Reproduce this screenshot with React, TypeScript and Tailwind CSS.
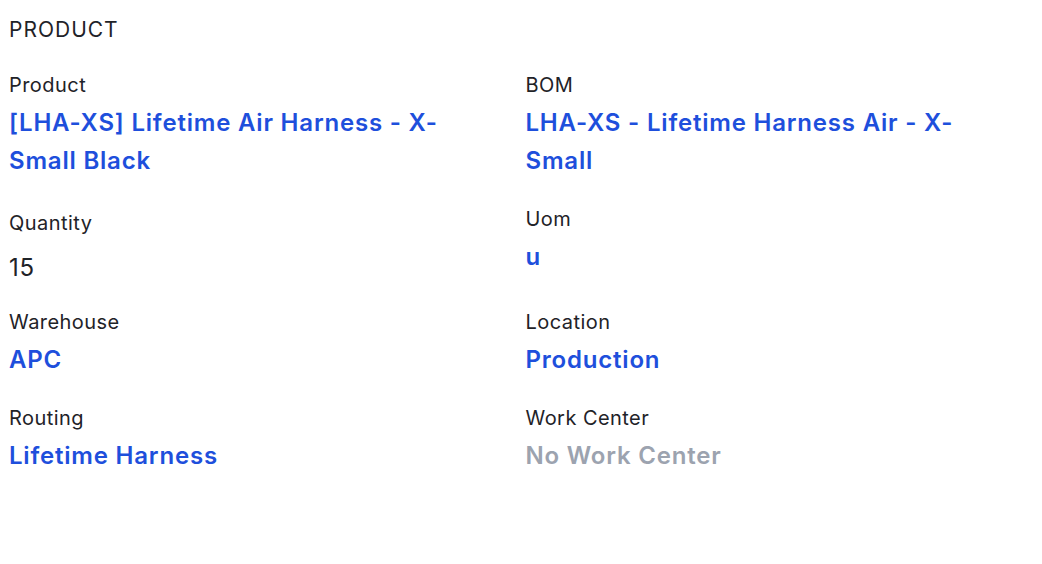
import React from "react";

type Field = {
  label: string;
  value: string;
  kind?: "link" | "plain" | "muted";
};

const fields: Field[] = [
  { label: "Product", value: "[LHA-XS] Lifetime Air Harness - X-Small Black" },
  { label: "BOM", value: "LHA-XS - Lifetime Harness Air - X-Small" },
  { label: "Quantity", value: "15", kind: "plain" },
  { label: "Uom", value: "u" },
  { label: "Warehouse", value: "APC" },
  { label: "Location", value: "Production" },
  { label: "Routing", value: "Lifetime Harness" },
  { label: "Work Center", value: "No Work Center", kind: "muted" },
];

const FieldCell = ({ field }: { field: Field }) => {
  // la cantidad se pinta como texto plano, un poco más alta que los enlaces
  if (field.kind === "plain") {
    return (
      <div className="flex flex-col pt-[4px]">
        <span className="text-[20px] leading-[28px] tracking-[0.45px] text-[#1f2328]">{field.label}</span>
        <span className="mt-[16px] text-[24px] leading-[30px] tracking-[0.8px] text-[#1f2328]">{field.value}</span>
      </div>
    );
  }

  return (
    <div className="flex flex-col">
      <span className="text-[20px] leading-[28px] tracking-[0.45px] text-[#1f2328]">{field.label}</span>
      <a
        href="#"
        className={`mt-[5px] max-w-[460px] text-[24px] leading-[38px] font-semibold tracking-[0.8px] ${
          field.kind === "muted" ? "text-[#9ca3af]" : "text-[#1e4fdc]"
        }`}
      >
        {field.value}
      </a>
    </div>
  );
};

export default function App() {
  return (
    <div
      className="min-h-[564px] w-full bg-white pl-[9px] pr-2 pt-[16px]"
      style={{ fontFamily: "Inter, 'Noto Sans', sans-serif" }}
    >
      <h2 className="text-[21px] leading-[28px] font-normal tracking-[1px] text-[#1f2328]">PRODUCT</h2>
      <div className="mt-[27px] grid grid-cols-2 gap-x-2 gap-y-[25px]">
        {fields.map((f) => (
          <FieldCell key={f.label} field={f} />
        ))}
      </div>
    </div>
  );
}
